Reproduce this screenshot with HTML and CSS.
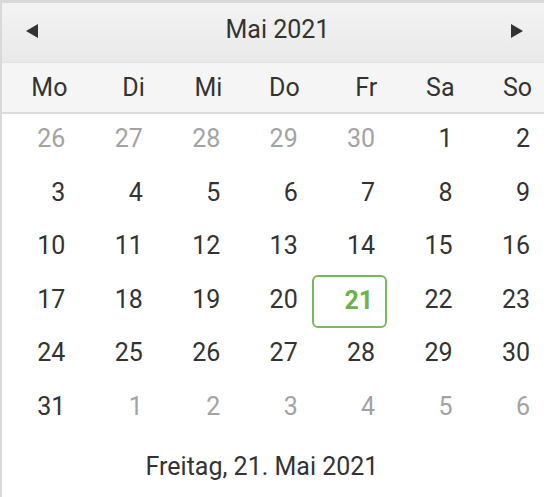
FILE: index.html
```html
<!DOCTYPE html>
<html lang="de">
<head>
    <meta charset="UTF-8">
    <title>Kalender</title>
    <link rel="stylesheet" href="styles.css">
</head>
<body>
    <div class="calendar">
        <div class="cal-header">
            <span class="nav prev"></span>
            <span class="title">Mai 2021</span>
            <span class="nav next"></span>
        </div>
        <div class="weekdays">
            <span>Mo</span><span>Di</span><span>Mi</span><span>Do</span><span>Fr</span><span>Sa</span><span>So</span>
        </div>
        <div class="days">
            <span class="other">26</span><span class="other">27</span><span class="other">28</span><span class="other">29</span><span class="other">30</span><span>1</span><span>2</span>
            <span>3</span><span>4</span><span>5</span><span>6</span><span>7</span><span>8</span><span>9</span>
            <span>10</span><span>11</span><span>12</span><span>13</span><span>14</span><span>15</span><span>16</span>
            <span>17</span><span>18</span><span>19</span><span>20</span><span class="selected">21</span><span>22</span><span>23</span>
            <span>24</span><span>25</span><span>26</span><span>27</span><span>28</span><span>29</span><span>30</span>
            <span>31</span><span class="other">1</span><span class="other">2</span><span class="other">3</span><span class="other">4</span><span class="other">5</span><span class="other">6</span>
        </div>
        <div class="cal-footer">Freitag, 21. Mai 2021</div>
    </div>
</body>
</html>
```

FILE: styles.css
```css
body {
    margin: 0;
    padding: 0;
    background: #fff;
    font-family: Roboto, "Liberation Sans", sans-serif;
    color: #333;
}
.calendar {
    width: 542px;
    border: 2px solid #d9d9d9;
    border-top-width: 3px;
    border-right: none;
    background: #fff;
    font-size: 25px;
}
.cal-header {
    height: 60px;
    display: flex;
    align-items: center;
    justify-content: space-between;
    padding: 0 21px 0 24px;
    background: linear-gradient(#f3f3f3, #e9e9e9);
    border-bottom: 1px solid #e2e2e2;
    box-sizing: border-box;
}
.title {
    margin-top: -6px;
    padding-left: 6px;
}
.nav {
    width: 0;
    height: 0;
    border-top: 7px solid transparent;
    border-bottom: 7px solid transparent;
    margin-top: -4px;
}
.prev {
    border-right: 12px solid #333;
}
.next {
    border-left: 12px solid #333;
}
.weekdays {
    display: grid;
    grid-template-columns: repeat(7, 1fr);
    height: 49px;
    align-items: center;
    background: #f5f5f5;
    border-bottom: 2px solid #dcdcdc;
}
.weekdays span {
    text-align: right;
    padding-right: 12px;
    margin-top: 0;
}
.days {
    display: grid;
    grid-template-columns: repeat(7, 1fr);
    grid-auto-rows: 53.5px;
}
.days span {
    display: flex;
    align-items: center;
    justify-content: flex-end;
    padding-right: 14px;
    padding-bottom: 4px;
    box-sizing: border-box;
}
.days .other {
    color: #a3a3a3;
}
.days .selected {
    color: #6cb34a;
    font-weight: bold;
    border: 2px solid #7ab85c;
    border-radius: 6px;
    padding-right: 12px;
    padding-bottom: 2px;
    margin: 0 2px 0 0;
}
.cal-footer {
    height: 62px;
    display: flex;
    align-items: center;
    justify-content: center;
    padding-right: 22px;
}
```
